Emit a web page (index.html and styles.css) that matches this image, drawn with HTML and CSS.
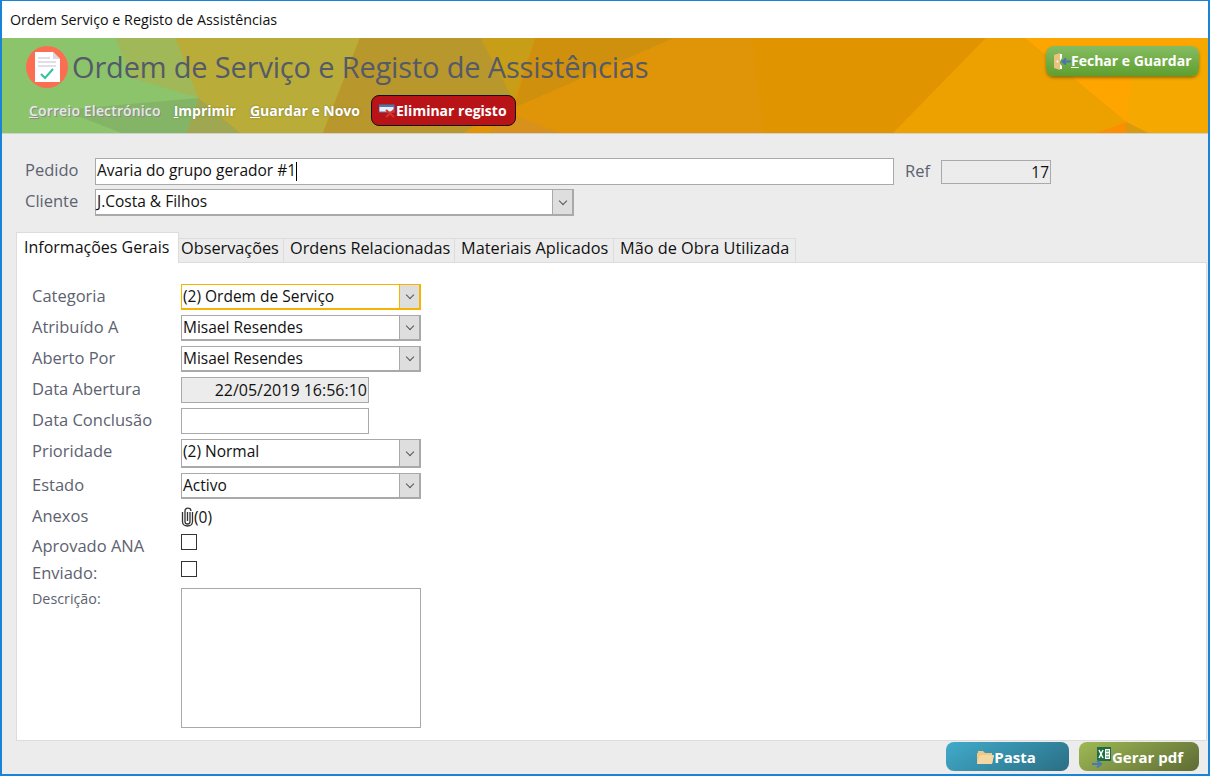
FILE: index.html
```html
<!DOCTYPE html>
<html lang="en">
<head>
    <meta charset="UTF-8">
    <title>Ordem Serviço e Registo de Assistências</title>
    <link rel="stylesheet" href="styles.css">
</head>
<body>
    <div class="window">
        <div class="titlebar">Ordem Serviço e Registo de Assistências</div>

        <div class="header">
            <svg class="headerBg" viewBox="0 0 1210 95" preserveAspectRatio="none">
                <rect width="1210" height="95" fill="#e09408"/>
                <rect width="200" height="95" fill="#8cc46c"/>
                <polygon points="114,0 174,0 197,60 130,40" fill="#a0b858"/>
                <polygon points="197,60 185,95 120,95 60,72" fill="#84b566"/>
                <polygon points="197,60 239,95 185,95" fill="#9fa850"/>
                <polygon points="174,0 359,0 322,95 239,95 197,60" fill="#b9ac39"/>
                <polygon points="359,0 535,0 513,62 463,95 322,95" fill="#b8982c"/>
                <polygon points="480,0 535,0 513,62" fill="#c89d18"/>
                <polygon points="500,72 560,95 490,95" fill="#d8911c"/>
                <polygon points="535,0 674,0 513,70" fill="#cf900e"/>
                <polygon points="752,0 987,0 894,95 765,95" fill="#df9400"/>
                <polygon points="987,0 1026,0 1128,84 1120,95 894,95" fill="#eda100"/>
                <polygon points="1026,0 1210,0 1210,95 1150,95 1128,84" fill="#fea500"/>
                <polygon points="1136,25 1210,0 1210,95 1150,95 1128,84" fill="#f5a800"/>
                <polygon points="1128,84 1128,95 1098,95" fill="#fb8f00"/>
                <polygon points="1128,84 1150,95 1128,95" fill="#d89a10"/>
            </svg>

            <div class="headerLeft">
                <div class="headerTitle">
                    <svg class="logo" width="42" height="42" viewBox="0 0 42 42">
                        <ellipse cx="21" cy="21" rx="21" ry="21" fill="#fb6e52"/>
                        <path d="M9 6H27L34 13V36H9Z" fill="#fff"/>
                        <path d="M27 6L34 13H27Z" fill="#d9d9e2"/>
                        <path d="M12 12H24M12 16H30M12 20H30" stroke="#d5d5e0" stroke-width="1.5"/>
                        <path d="M15 28L19 32L27 23" stroke="#2fc49a" stroke-width="2" fill="none"/>
                    </svg>
                    <h1>Ordem de Serviço e Registo de Assistências</h1>
                </div>
                <div class="headerActions">
                    <span class="headerLink disabled"><u>C</u>orreio Electrónico</span>
                    <span class="headerLink"><u>I</u>mprimir</span>
                    <span class="headerLink"><u>G</u>uardar e Novo</span>
                    <span class="deleteBtn">
                        <svg width="17" height="14" viewBox="0 0 17 14">
                            <rect x="0" y="1" width="15" height="7" fill="#e8eef6" stroke="#4a78b0"/>
                            <rect x="0" y="1" width="15" height="2" fill="#4a78b0"/>
                            <path d="M7 6L15 13M15 6L7 13" stroke="#d8342c" stroke-width="2"/>
                        </svg>Eliminar registo
                    </span>
                </div>
            </div>

            <span class="closeBtn">
                <svg width="17" height="17" viewBox="0 0 17 17">
                    <path d="M0 2L6 0V17L0 15Z" fill="#e9c27e"/>
                    <path d="M6 1H8V5L6 8V11L8 13V16H6Z" fill="#fff"/>
                    <circle cx="3.5" cy="8.5" r="0.9" fill="#fff"/>
                    <path d="M17 8.5H9M12 5.5L8.5 8.5L12 11.5" stroke="#4a72b8" stroke-width="2" fill="none"/>
                </svg><span><u>F</u>echar e Guardar</span>
            </span>
        </div>

        <div class="content">
            <div class="topRow">
                <label class="topLabel">Pedido</label>
                <div class="field pedidoField">Avaria do grupo gerador #1<span class="caret"></span></div>
                <label class="refLabel">Ref</label>
                <div class="field refField">17</div>
            </div>
            <div class="topRow">
                <label class="topLabel">Cliente</label>
                <div class="combo clienteCombo"><span class="comboText">J.Costa &amp; Filhos</span><span class="comboArrow"><i></i></span></div>
            </div>

            <div class="tabs">
                <div class="tab active">Informações Gerais</div>
                <div class="tab tabObs">Observações</div>
                <div class="tab tabOrd">Ordens Relacionadas</div>
                <div class="tab tabMat">Materiais Aplicados</div>
                <div class="tab tabMao">Mão de Obra Utilizada</div>
            </div>

            <div class="panel">
                <div class="formGrid">
                    <label>Categoria</label>
                    <div class="combo focused"><span class="comboText">(2) Ordem de Serviço</span><span class="comboArrow"><i></i></span></div>

                    <label>Atribuído A</label>
                    <div class="combo"><span class="comboText">Misael Resendes</span><span class="comboArrow"><i></i></span></div>

                    <label>Aberto Por</label>
                    <div class="combo"><span class="comboText">Misael Resendes</span><span class="comboArrow"><i></i></span></div>

                    <label>Data Abertura</label>
                    <div class="field dateField locked">22/05/2019 16:56:10</div>

                    <label>Data Conclusão</label>
                    <div class="field dateField"></div>

                    <label class="tallLabel">Prioridade</label>
                    <div class="combo tall"><span class="comboText">(2) Normal</span><span class="comboArrow"><i></i></span></div>

                    <label>Estado</label>
                    <div class="combo"><span class="comboText">Activo</span><span class="comboArrow"><i></i></span></div>

                    <label class="anexosLabel">Anexos</label>
                    <div class="anexos">
                        <svg width="13" height="20" viewBox="0 0 13 20">
                            <path d="M9 5V14.5C9 16 8 17 6.5 17S4 16 4 14.5V4C4 2.3 5 1.2 6.8 1.2S10 2.3 10 4M11.5 5V14.5C11.5 17 9.5 19 6.5 19S1.5 17 1.5 14.5V5M6.5 5V14" stroke="#333" stroke-width="1.3" fill="none"/>
                        </svg>(0)
                    </div>

                    <label class="checkLabel">Aprovado ANA</label>
                    <span class="checkbox"></span>

                    <label class="checkLabel">Enviado:</label>
                    <span class="checkbox"></span>

                    <label class="descLabel">Descrição:</label>
                    <div class="descBox"></div>
                </div>
            </div>
        </div>

        <div class="footer">
            <span class="footerBtn pastaBtn">
                <svg width="17" height="14" viewBox="0 0 17 14">
                    <path d="M0 3H1V1H6L8 3H15V5H17L15 14H0Z" fill="#edc988"/>
                    <path d="M3 5H17L15 14H0Z" fill="#f3d8a4"/>
                </svg>Pasta
            </span>
            <span class="footerBtn pdfBtn">
                <svg width="20" height="22" viewBox="0 0 20 22">
                    <rect x="5" y="1" width="14" height="14" fill="#1d6f42"/>
                    <rect x="13" y="3" width="5" height="10" fill="#fff"/>
                    <path d="M14 5H17M14 8H17M14 11H17" stroke="#1d6f42"/>
                    <path d="M7 4L11 12M11 4L7 12" stroke="#fff" stroke-width="1.5"/>
                    <path d="M0 18H7M5 14.5L9 18L5 21.5" stroke="#4a78b8" stroke-width="2" fill="none"/>
                </svg>Gerar pdf
            </span>
        </div>
    </div>
</body>
</html>
```

FILE: styles.css
```css
* {
    box-sizing: border-box;
}

body {
    margin: 0;
    font-family: "Open Sans", "Noto Sans", sans-serif;
    background-color: #ececec;
}

u {
    text-decoration: underline;
}

.window {
    width: 1210px;
    height: 776px;
    border: 1px solid #1883d7;
    border-width: 1px 2px 2px 2px;
    background-color: #ececec;
    overflow: hidden;
}

.titlebar {
    height: 37px;
    padding-left: 8px;
    line-height: 37px;
    font-size: 14.3px;
    color: #111;
    background-color: #fff;
}

/* header */
.header {
    position: relative;
    display: flex;
    justify-content: space-between;
    height: 96px;
    padding: 8px 9px 0 24px;
    border-bottom: 1px solid #d0d0d0;
}

.headerBg {
    position: absolute;
    top: 0;
    left: 0;
    width: 100%;
    height: 95px;
}

.headerLeft,
.closeBtn {
    position: relative;
}

.headerTitle {
    display: flex;
    align-items: center;
}

.logo {
    margin-right: 4px;
}

.headerTitle h1 {
    margin: 0;
    padding-bottom: 2px;
    font-size: 29px;
    font-weight: 400;
    letter-spacing: -0.17px;
    color: #555a68;
}

.headerActions {
    display: flex;
    align-items: center;
    margin-top: 7px;
    padding-left: 3px;
}

.headerLink {
    margin-right: 14px;
    font-size: 14px;
    font-weight: 700;
    color: #fff;
    text-shadow: 0 0 2px rgba(90, 90, 60, 0.6);
}

.headerLink.disabled {
    margin-right: 13px;
    color: #e8e8e8;
    font-weight: 600;
    letter-spacing: 0.15px;
    text-shadow: 1px 1px 0 #8a8a8a;
}

.headerLink:nth-child(3) {
    margin-right: 11px;
}

.deleteBtn {
    display: flex;
    align-items: center;
    width: 145px;
    height: 31px;
    padding-left: 7px;
    border: 1px solid #111;
    border-radius: 8px;
    background-color: #b81418;
    font-size: 14px;
    font-weight: 700;
    color: #fff;
}

.closeBtn {
    display: flex;
    align-items: center;
    width: 153px;
    height: 30px;
    padding-left: 8px;
    border-radius: 8px;
    background: linear-gradient(#86bc62, #5e9f2f);
    box-shadow: 0 2px 3px rgba(90, 80, 20, 0.6);
    font-size: 14px;
    font-weight: 700;
    color: #fff;
}

.closeBtn span {
    padding-bottom: 2px;
}

/* top fields */
.content {
    padding: 24px 1px 0 14px;
}

.topRow {
    display: flex;
    align-items: center;
    height: 27px;
    margin-bottom: 4px;
}

.topLabel {
    width: 79px;
    padding: 0 0 4px 9px;
    font-size: 16.5px;
    color: #5d6270;
}

.field,
.combo {
    font-size: 15.5px;
    color: #111;
    background-color: #fff;
}

.field {
    height: 26px;
    padding-left: 1px;
    border: 1px solid #a9a9a9;
    line-height: 24px;
}

.pedidoField {
    width: 799px;
    height: 27px;
    line-height: 23px;
}

.caret {
    display: inline-block;
    width: 1px;
    height: 19px;
    vertical-align: middle;
    background-color: #000;
}

.refLabel {
    width: 47px;
    padding: 0 0 3px 11px;
    font-size: 16.5px;
    color: #5d6270;
}

.refField {
    width: 110px;
    height: 24px;
    padding-right: 1px;
    line-height: 22px;
    text-align: right;
    background-color: #ececec;
}

.combo {
    display: flex;
    justify-content: space-between;
    height: 26px;
    border: 1px solid #a9a9a9;
    border-right-width: 2px;
    border-bottom-width: 2px;
}

.clienteCombo {
    width: 479px;
    height: 27px;
}

.comboText {
    padding-left: 1px;
    line-height: 23px;
}

.comboArrow {
    display: flex;
    justify-content: center;
    align-items: center;
    width: 20px;
    border-left: 1px solid #a9a9a9;
    background-color: #dedede;
}

.comboArrow i {
    width: 6px;
    height: 6px;
    margin-top: -3px;
    border-right: 1px solid #555;
    border-bottom: 1px solid #555;
    transform: rotate(45deg);
}

.combo.focused,
.combo.focused .comboArrow {
    border-color: #f4b400;
}

.combo.focused {
    border-width: 1px 2px 2px 1px;
}

/* tabs */
.tabs {
    display: flex;
    align-items: flex-end;
    height: 42px;
}

.tab {
    height: 24px;
    padding-left: 2px;
    border: 1px solid #dcdcdc;
    border-left: none;
    border-bottom: none;
    font-size: 16.3px;
    line-height: 19px;
    white-space: nowrap;
    color: #111;
}

.tab.active {
    position: relative;
    width: 163px;
    height: 31px;
    margin-bottom: -1px;
    border-left: 1px solid #dcdcdc;
    padding-left: 7px;
    background-color: #fff;
    font-size: 16px;
    line-height: 28px;
}

.tabObs {
    width: 105px;
}

.tabOrd {
    width: 171px;
    padding-left: 6px;
}

.tabMat {
    width: 159px;
    padding-left: 6px;
}

.tabMao {
    width: 182px;
    padding-left: 6px;
}

.panel {
    height: 479px;
    padding: 21px 0 0 15px;
    border: 1px solid #dcdcdc;
    background-color: #fff;
}

.formGrid {
    display: grid;
    grid-template-columns: 149px 240px;
    grid-template-rows: 26px 26px 26px 26px 26px 29px 26px 25px 22px 22px 140px;
    row-gap: 5px;
    align-items: center;
}

.formGrid label {
    padding-bottom: 4px;
    font-size: 16.5px;
    color: #5d6270;
}

.dateField {
    width: 188px;
}

.locked {
    padding-right: 1px;
    font-size: 16px;
    text-align: right;
    background-color: #ececec;
}

.combo.tall {
    height: 29px;
}

.formGrid .tallLabel {
    align-self: start;
    padding-bottom: 0;
}

.anexos {
    display: flex;
    align-items: center;
    font-size: 15.5px;
    color: #111;
}

.formGrid .anexosLabel {
    padding-bottom: 2px;
}

.formGrid .checkLabel {
    padding: 0;
}

.checkbox {
    align-self: start;
    width: 16px;
    height: 16px;
    border: 1px solid #333;
    background-color: #fff;
}

.formGrid .descLabel {
    align-self: start;
    padding: 1px 0 0;
    font-size: 14.3px;
}

.descBox {
    height: 140px;
    border: 1px solid #a9a9a9;
    background-color: #fff;
}

/* footer */
.footer {
    display: flex;
    justify-content: flex-end;
    gap: 10px;
    padding: 1px 9px 0 0;
}

.footerBtn {
    display: flex;
    justify-content: center;
    align-items: center;
    height: 29px;
    border-radius: 8px;
    font-size: 15px;
    font-weight: 700;
    color: #fff;
}

.pastaBtn {
    width: 123px;
    padding-right: 2px;
    background: linear-gradient(150deg, #41abcb, #2a6e84);
}

.pdfBtn {
    width: 120px;
    padding-right: 3px;
    background: linear-gradient(150deg, #9fb954, #5d6b34);
}
```
